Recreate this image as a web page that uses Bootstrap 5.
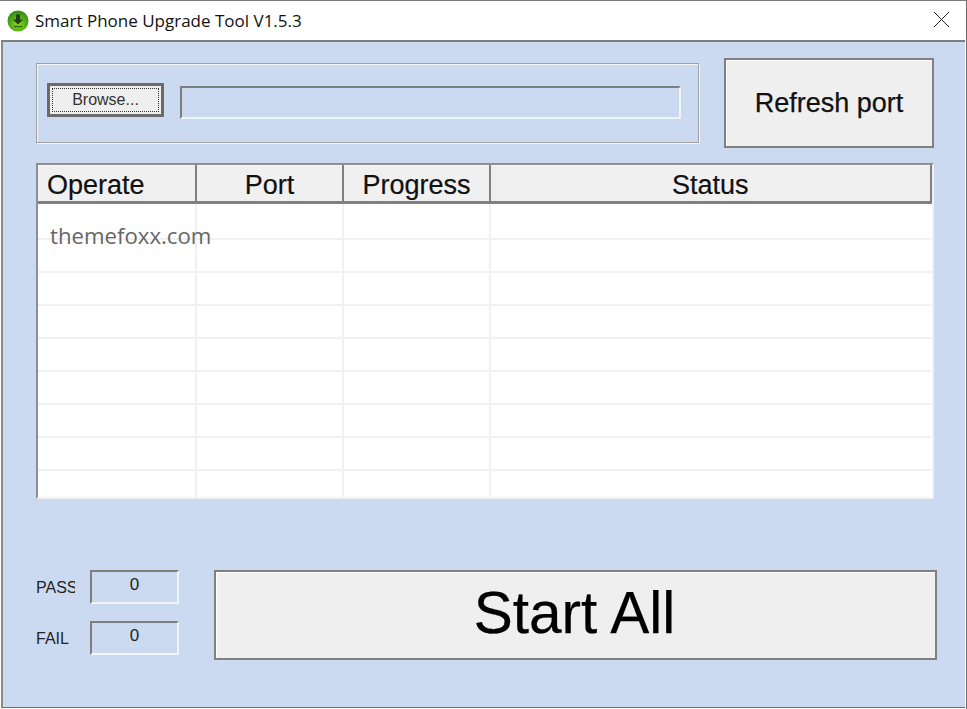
<!DOCTYPE html>
<html lang="en">
<head>
  <meta charset="UTF-8">
  <title>Smart Phone Upgrade Tool V1.5.3</title>
  <link href="https://cdn.jsdelivr.net/npm/bootstrap@5.3.3/dist/css/bootstrap.min.css" rel="stylesheet">
  <style>
    html, body { margin: 0; height: 709px; overflow: hidden; background: #fff; }
    .app-window { width: 967px; height: 709px; font-family: "Liberation Sans", Arial, sans-serif; color: #111; border-top: 1px solid #7a7a7a; border-right: 1px solid #6e6e6e; }
    .title-bar { height: 39px; padding-left: 7px; gap: 6px; }
    .title-text { font-family: "Open Sans", sans-serif; font-size: 17px; color: #111; letter-spacing: 0; }
    .close-x { margin-right: 17px; margin-bottom: 2px; }
    .client { width: 964px; margin-left: 1px; height: 668px; background: #cbdaf1; border-top: 2px solid #7f7f7f; border-left: 2px solid #8a8a8a; border-bottom: 1px solid #6e6e6e; padding: 16px 0 0 33px; }
    .top-row { width: 898px; height: 90px; }
    .file-group { width: 663px; height: 80px; margin-top: 5px; border: 1px solid #a0a0a0; box-shadow: inset 1px 1px 0 #f4f6fa, 1px 1px 0 #f4f6fa; padding: 0 17px 0 10px; gap: 16px; }
    .browse-btn { width: 117px; height: 34px; margin-top: 19px; padding: 2px; background: #efefef; border: 3px solid #6b6b6b; border-radius: 0; font-family: "Liberation Sans", sans-serif; font-size: 16px; line-height: 1; color: #333; }
    .browse-btn:hover { background: #efefef; border-color: #6b6b6b; }
    .browse-btn span { display: flex; align-items: center; justify-content: center; height: 100%; border: 1px dotted #333; }
    .path-box { height: 33px; margin-top: 22px; background: transparent; border-top: 2px solid #7f7f7f; border-left: 2px solid #7f7f7f; border-right: 2px solid #f2f4f8; border-bottom: 2px solid #f2f4f8; border-radius: 0; }
    .raised-btn { background: #efefef; border: 2px solid #808080; border-radius: 0; box-shadow: inset 1px 1px 0 #fff; color: #111; padding: 0; -webkit-text-stroke: .25px currentColor; }
    .raised-btn:hover { background: #efefef; border-color: #808080; color: #111; }
    .refresh-btn { width: 210px; height: 90px; font-size: 27px; }
    .grid-wrap { width: 898px; height: 336px; margin-top: 15px; overflow: hidden; border-top: 2px solid #8f8f8f; border-left: 2px solid #8f8f8f; border-right: 2px solid #f0f1f4; border-bottom: 2px solid #f0f1f4; background: #fff; }
    .port-grid { table-layout: fixed; width: 893px; margin: 0; border-collapse: collapse; }
    .port-grid th { height: 37px; padding: 4px 0 0; background: #f0f0f0; border-top: 1px solid #f8f8f8; border-right: 2px solid #808080; border-bottom: 3px solid #808080; font-size: 27px; font-weight: 400; line-height: 1; text-align: center; color: #111; vertical-align: middle; -webkit-text-stroke: .2px currentColor; }
    .port-grid th:last-child { border-right-width: 3px; }
    .port-grid th.cell-left { text-align: left; padding-left: 9px; }
    .port-grid td { height: 33px; padding: 0; background: #fff; border-right: 2px solid #f1f1f1; border-bottom: 2px solid #f1f1f1; }
    .port-grid tbody tr:first-child td { height: 36px; }
    .port-grid td:last-child { border-right: 0; }
    .port-grid tr:last-child td { height: 28px; border-bottom: 0; }
    .watermark { position: absolute; left: 12px; top: 60px; font-family: "Open Sans", sans-serif; font-size: 22.2px; line-height: 1; color: #666; }
    .bottom-row { width: 901px; height: 90px; margin-top: 71px; }
    .counter-col { width: 143px; margin-right: 35px; gap: 17px; }
    .counter-label { width: 39px; margin-right: 15px; padding-top: 2px; overflow: hidden; font-size: 16px; line-height: 1; color: #222; white-space: nowrap; }
    .counter-box { width: 89px; height: 34px; border-top: 2px solid #7f7f7f; border-left: 2px solid #7f7f7f; border-right: 2px solid #f2f4f8; border-bottom: 2px solid #f2f4f8; font-size: 17px; line-height: 1; padding-top: 4px; text-align: center; color: #222; }
    .start-btn { width: 723px; height: 90px; padding: 0 2px 4px 0; font-size: 58.5px; line-height: 1; color: #000; }
  </style>
</head>
<body>
  <div class="app-window">
    <div class="title-bar d-flex align-items-center">
      <svg width="22" height="22" viewBox="0 0 22 22">
        <defs>
          <radialGradient id="ballFill" cx="50%" cy="65%" r="60%">
            <stop offset="0" stop-color="#8fdc1e"/>
            <stop offset="1" stop-color="#2f8f12"/>
          </radialGradient>
        </defs>
        <circle cx="11" cy="11" r="10.5" fill="url(#ballFill)"/>
        <path d="M9 4.5h4v5h3.2L11 14.5 5.8 9.5H9z" fill="#23401a"/>
        <path d="M7 16.5h8" stroke="#2f6a16" stroke-width="1.4"/>
      </svg>
      <span class="title-text flex-grow-1">Smart Phone Upgrade Tool V1.5.3</span>
      <svg class="close-x" width="15" height="15" viewBox="0 0 15 15">
        <path d="M0 0L15 15M15 0L0 15" stroke="#222" stroke-width="1" fill="none"/>
      </svg>
    </div>

    <div class="client">
      <div class="top-row d-flex align-items-start justify-content-between">
        <div class="file-group d-flex align-items-start">
          <button type="button" class="btn browse-btn"><span>Browse...</span></button>
          <div class="path-box flex-grow-1"></div>
        </div>
        <button type="button" class="btn raised-btn refresh-btn">Refresh port</button>
      </div>

      <div class="grid-wrap position-relative">
        <table class="port-grid">
          <colgroup>
            <col style="width:158px"><col style="width:147px"><col style="width:147px"><col style="width:441px">
          </colgroup>
          <thead>
            <tr><th class="cell-left">Operate</th><th>Port</th><th>Progress</th><th>Status</th></tr>
          </thead>
          <tbody>
            <tr><td></td><td></td><td></td><td></td></tr>
            <tr><td></td><td></td><td></td><td></td></tr>
            <tr><td></td><td></td><td></td><td></td></tr>
            <tr><td></td><td></td><td></td><td></td></tr>
            <tr><td></td><td></td><td></td><td></td></tr>
            <tr><td></td><td></td><td></td><td></td></tr>
            <tr><td></td><td></td><td></td><td></td></tr>
            <tr><td></td><td></td><td></td><td></td></tr>
            <tr><td></td><td></td><td></td><td></td></tr>
          </tbody>
        </table>
        <div class="watermark">themefoxx.com</div>
      </div>

      <div class="bottom-row d-flex">
        <div class="counter-col d-flex flex-column">
          <div class="d-flex align-items-center">
            <div class="counter-label">PASS</div>
            <div class="counter-box">0</div>
          </div>
          <div class="d-flex align-items-center">
            <div class="counter-label">FAIL</div>
            <div class="counter-box">0</div>
          </div>
        </div>
        <button type="button" class="btn raised-btn start-btn">Start All</button>
      </div>
    </div>
  </div>
  <script src="https://cdn.jsdelivr.net/npm/bootstrap@5.3.3/dist/js/bootstrap.bundle.min.js"></script>
</body>
</html>
